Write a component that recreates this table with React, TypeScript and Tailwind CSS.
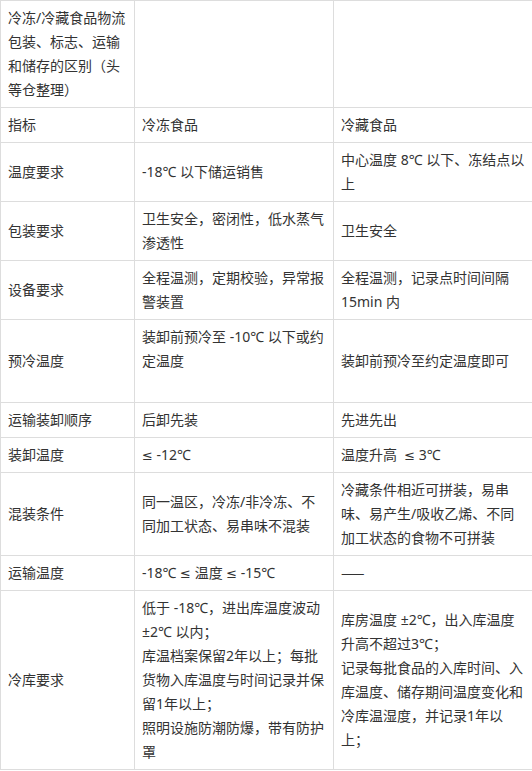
import React from "react";

type Cell = React.ReactNode[];
type Row = [Cell, Cell, Cell];

const Le = () => (
  <span style={{ fontFamily: '"DejaVu Sans", sans-serif' }} className="text-[13px] leading-none">
    ≤
  </span>
);

const rows: Row[] = [
  [["冷冻/冷藏食品物流", "包装、标志、运输", "和储存的区别（头", "等仓整理）"], [], []],
  [["指标"], ["冷冻食品"], ["冷藏食品"]],
  [["温度要求"], ["-18℃ 以下储运销售"], ["中心温度 8℃ 以下、冻结点以", "上"]],
  [["包装要求"], ["卫生安全，密闭性，低水蒸气", "渗透性"], ["卫生安全"]],
  [["设备要求"], ["全程温测，定期校验，异常报", "警装置"], ["全程温测，记录点时间间隔", "15min 内"]],
  [["预冷温度"], ["装卸前预冷至 -10℃ 以下或约", "定温度", "\u00a0"], ["装卸前预冷至约定温度即可"]],
  [["运输装卸顺序"], ["后卸先装"], ["先进先出"]],
  [["装卸温度"], [<><Le /> -12℃</>], [<>温度升高{"\u00a0 "}<Le /> 3℃</>]],
  [["混装条件"], ["同一温区，冷冻/非冷冻、不", "同加工状态、易串味不混装"], ["冷藏条件相近可拼装，易串", "味、易产生/吸收乙烯、不同", "加工状态的食物不可拼装"]],
  [
    ["运输温度"],
    [<>-18℃ <Le /> 温度 <Le /> -15℃</>],
    [<span className="leading-none" style={{ fontFamily: '"Noto Sans CJK SC", sans-serif' }}>——</span>],
  ],
  [
    ["冷库要求"],
    ["低于 -18℃，进出库温度波动", "±2℃ 以内；", "库温档案保留2年以上；每批", "货物入库温度与时间记录并保", "留1年以上；", "照明设施防潮防爆，带有防护", "罩"],
    ["库房温度 ±2℃，出入库温度", "升高不超过3℃；", "记录每批食品的入库时间、入", "库温度、储存期间温度变化和", "冷库温湿度，并记录1年以", "上；"],
  ],
];

function CellView({ lines }: { lines: Cell }) {
  return (
    <td className="border border-[#dddddd] px-[7px] py-[5px] align-middle whitespace-nowrap text-[14px] leading-[24px] text-[#333333]">
      {lines.map((l, i) => (
        <div key={i} className="h-[24px]">
          {l}
        </div>
      ))}
    </td>
  );
}

export default function App() {
  return (
    <div
      className="w-[532px] h-[771px] overflow-hidden bg-white"
      style={{ fontFamily: '"Noto Sans", "Noto Sans CJK SC", sans-serif' }}
    >
      <table className="table-fixed border-collapse w-[542px]">
        <colgroup>
          <col className="w-[134px]" />
          <col className="w-[199px]" />
          <col className="w-[209px]" />
        </colgroup>
        <tbody>
          {rows.map((r, i) => (
            <tr key={i}>
              <CellView lines={r[0]} />
              <CellView lines={r[1]} />
              <CellView lines={r[2]} />
            </tr>
          ))}
        </tbody>
      </table>
    </div>
  );
}
